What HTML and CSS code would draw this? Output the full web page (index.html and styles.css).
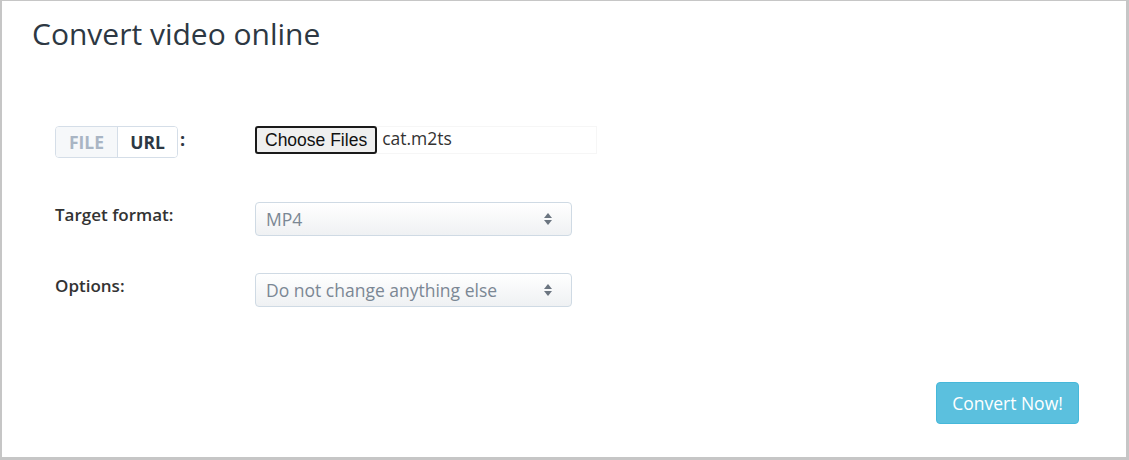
FILE: index.html
```html
<!DOCTYPE html>
<html>
<head>
<meta charset="utf-8">
<link rel="stylesheet" href="styles.css">
</head>
<body>
<div class="card">
  <h1 class="title">Convert video online</h1>
  <form class="form">
    <div class="row row-file">
      <div class="label-col">
        <div class="toggle">
          <span class="seg seg-file">FILE</span><span class="seg seg-url">URL</span>
        </div>
        <span class="colon">:</span>
      </div>
      <div class="control-col">
        <div class="file-input">
          <span class="file-btn">Choose Files</span>
          <span class="file-name">cat.m2ts</span>
        </div>
      </div>
    </div>
    <div class="row row-select">
      <div class="label-col"><label class="label">Target format:</label></div>
      <div class="control-col">
        <div class="select"><span class="select-text">MP4</span>
          <svg class="arrows" width="8" height="14" viewBox="0 0 8 14"><path d="M4 1 L8 6 L0 6 Z" fill="#6b7580"/><path d="M0 8 L8 8 L4 13 Z" fill="#6b7580"/></svg>
        </div>
      </div>
    </div>
    <div class="row row-select row-options">
      <div class="label-col"><label class="label">Options:</label></div>
      <div class="control-col">
        <div class="select"><span class="select-text">Do not change anything else</span>
          <svg class="arrows" width="8" height="14" viewBox="0 0 8 14"><path d="M4 1 L8 6 L0 6 Z" fill="#6b7580"/><path d="M0 8 L8 8 L4 13 Z" fill="#6b7580"/></svg>
        </div>
      </div>
    </div>
  </form>
  <div class="actions">
    <button type="button" class="convert">Convert Now!</button>
  </div>
</div>
</body>
</html>
```
FILE: styles.css
```css
html, body {
  margin: 0;
  padding: 0;
  background: #ffffff;
}
body {
  font-family: "Open Sans", "Liberation Sans", sans-serif;
  color: #333333;
}
.card {
  box-sizing: border-box;
  width: 1129px;
  height: 460px;
  border-style: solid;
  border-color: #c6c6c6;
  border-width: 1px 3px 3px 2px;
  padding: 0 47px 0 30px;
  display: flex;
  flex-direction: column;
}
.title {
  margin: 13px 0 0 0;
  font-size: 30px;
  font-weight: 400;
  line-height: 40px;
  color: #2d3843;
}
.form {
  margin-top: 72px;
  padding-left: 23px;
  display: flex;
  flex-direction: column;
}
.row {
  display: flex;
  align-items: flex-start;
}
.label-col {
  width: 200px;
  display: flex;
  align-items: center;
}
.toggle {
  display: flex;
  border: 1px solid #d5dee8;
  border-radius: 4px;
  height: 30px;
  overflow: hidden;
}
.seg {
  display: flex;
  align-items: center;
  justify-content: center;
  font-weight: 700;
  font-size: 17.5px;
}
.seg-file {
  width: 61px;
  background: #f6f8fa;
  color: #a9b5c4;
  border-right: 1px solid #d5dee8;
}
.seg-url {
  width: 59px;
  background: #ffffff;
  color: #2d3843;
}
.colon {
  margin-left: 2px;
  font-weight: 700;
  font-size: 18px;
  color: #2d3843;
  position: relative;
  top: -3px;
}
.file-input {
  box-sizing: border-box;
  width: 342px;
  height: 28px;
  margin-top: 0;
  border: 1px solid #f6f6f6;
  display: flex;
  align-items: center;
}
.file-btn {
  box-sizing: border-box;
  height: 28px;
  padding: 0 8px;
  margin-left: -1px;
  border: 2px solid #1a1a1a;
  border-radius: 3px;
  background: #efefef;
  color: #111111;
  font-family: "Liberation Sans", Arial, sans-serif;
  font-size: 17.5px;
  display: flex;
  align-items: center;
}
.file-name {
  margin-left: 5px;
  font-size: 17.5px;
  color: #333333;
  position: relative;
  top: -2px;
}
.row-select {
  margin-top: 44px;
}
.row-options {
  margin-top: 37px;
}
.label {
  display: block;
  margin-top: 1px;
  font-size: 17px;
  font-weight: 600;
  color: #333333;
}
.select {
  box-sizing: border-box;
  width: 317px;
  height: 34px;
  border: 1px solid #cfdae4;
  border-radius: 4px;
  background: linear-gradient(to bottom, #ffffff, #eff1f3);
  display: flex;
  align-items: center;
  justify-content: space-between;
  padding: 0 19px 0 10px;
}
.select-text {
  font-size: 17.5px;
  color: #7b8794;
}
.arrows {
  display: block;
}
.actions {
  display: flex;
  justify-content: flex-end;
  margin-top: auto;
  margin-bottom: 33px;
}
.convert {
  box-sizing: border-box;
  height: 42px;
  width: 143px;
  border: 1px solid #46b8da;
  border-radius: 4px;
  background: #5bc0de;
  color: #ffffff;
  font-family: "Open Sans", "Liberation Sans", sans-serif;
  font-size: 17.5px;
  padding: 0;
}
```
